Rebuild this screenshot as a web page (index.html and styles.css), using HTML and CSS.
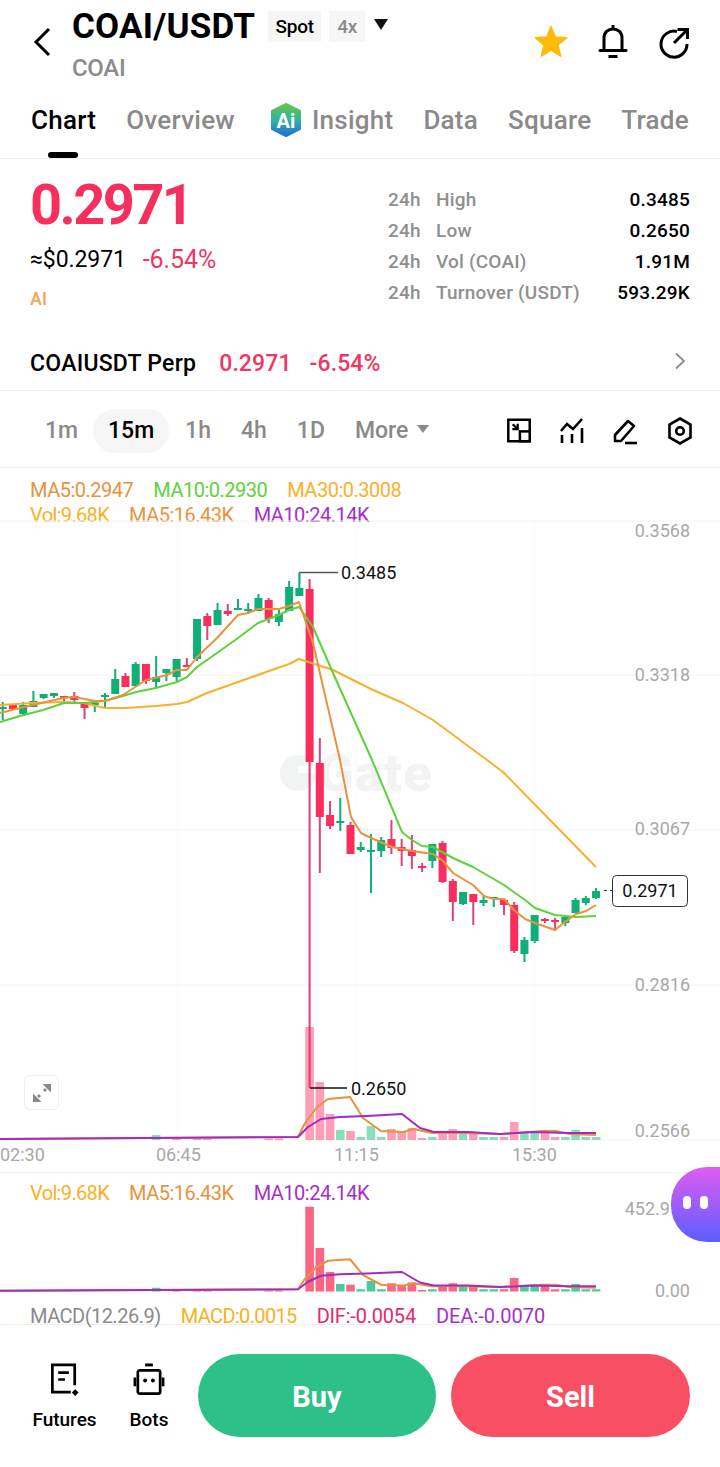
FILE: index.html
```html
<!DOCTYPE html>
<html lang="en">
<head>
    <meta charset="UTF-8">
    <meta name="viewport" content="width=device-width, initial-scale=1.0">
    <title>COAI/USDT</title>
    <link rel="stylesheet" href="styles.css">
</head>
<body>
    <div class="page">
        <header class="top">
            <svg class="back" width="18" height="30" viewBox="0 0 18 30"><path d="M16 2 L3 15 L16 28" fill="none" stroke="#000" stroke-width="3"/></svg>
            <div class="pair">
                <div class="pair-line">
                    <h1>COAI/USDT</h1>
                    <span class="chip">Spot</span>
                    <span class="chip chip-grey">4x</span>
                    <span class="caret"></span>
                </div>
                <div class="coin">COAI</div>
            </div>
            <div class="top-icons">
                <svg width="34" height="34" viewBox="0 0 36 36"><path d="M18 1.500 L22.600 12.600 L34.600 13.500 L25.400 21.200 L28.300 33 L18 26.600 L7.700 33 L10.600 21.200 L1.400 13.500 L13.400 12.600 Z" fill="#fdbb0a" stroke="#fdbb0a" stroke-width="1.500" stroke-linejoin="round"/></svg>
                <svg width="32" height="36" viewBox="0 0 32 36"><path d="M7 25 V14 C7 8.500 11 5 16 5 C21 5 25 8.500 25 14 V25" fill="none" stroke="#000" stroke-width="3"/><path d="M3 26.500 H29" stroke="#000" stroke-width="3" stroke-linecap="round"/><path d="M16 1 V5 M11.500 32.500 H20.500" stroke="#000" stroke-width="3"/></svg>
                <svg width="32" height="36" viewBox="0 0 32 36"><path d="M19 7.500 A13 13 0 1 0 29 20" fill="none" stroke="#000" stroke-width="3"/><path d="M16 19 L28 7 M19.500 5.500 H29.500 V15" fill="none" stroke="#000" stroke-width="3"/></svg>
            </div>
        </header>

        <nav class="tabs">
            <span class="tab tab-on">Chart</span>
            <span class="tab">Overview</span>
            <span class="tab tab-insight">
                <svg width="32" height="34" viewBox="0 0 32 34">
                    <defs><linearGradient id="hex" x1="0" y1="0" x2="0" y2="1"><stop offset="0" stop-color="#6cc24a"/><stop offset="0.5" stop-color="#2fb5a0"/><stop offset="1" stop-color="#1f6fe0"/></linearGradient></defs>
                    <path d="M16 1 L30 8 V26 L16 33 L2 26 V8 Z" fill="url(#hex)" stroke="url(#hex)" stroke-width="2" stroke-linejoin="round"/>
                    <text x="16" y="25" text-anchor="middle" class="hex-text">Ai</text>
                </svg>
                Insight
            </span>
            <span class="tab">Data</span>
            <span class="tab">Square</span>
            <span class="tab">Trade</span>
        </nav>

        <section class="stats">
            <div class="price-box">
                <div class="price">0.2971</div>
                <div class="price-sub"><span>≈$0.2971</span><span class="red">-6.54%</span></div>
                <div class="tag">AI</div>
            </div>
            <div class="facts">
                <span>24h</span><span>High</span><b>0.3485</b>
                <span>24h</span><span>Low</span><b>0.2650</b>
                <span>24h</span><span>Vol (COAI)</span><b>1.91M</b>
                <span>24h</span><span>Turnover (USDT)</span><b>593.29K</b>
            </div>
        </section>

        <div class="perp">
            <span class="perp-name">COAIUSDT Perp</span>
            <span class="red">0.2971</span>
            <span class="red">-6.54%</span>
            <svg class="perp-arrow" width="12" height="18" viewBox="0 0 12 18"><path d="M2 1.500 L10 9 L2 16.500" fill="none" stroke="#8a8a8a" stroke-width="1.800"/></svg>
        </div>

        <div class="frames">
            <span class="frame">1m</span>
            <span class="frame frame-on">15m</span>
            <span class="frame">1h</span>
            <span class="frame">4h</span>
            <span class="frame">1D</span>
            <span class="frame frame-more">More<i class="caret caret-small"></i></span>
            <div class="frame-icons">
                <svg width="26" height="25" viewBox="0 0 28 28"><path d="M2 2 H26 V26 H2 Z" fill="none" stroke="#000" stroke-width="2.800"/><rect x="15" y="15" width="11" height="11" fill="#fff" stroke="#000" stroke-width="2.800"/><path d="M7 7 L12 12 M12.500 6.500 V12.500 H6.500" fill="none" stroke="#000" stroke-width="2.600"/></svg>
                <svg width="26" height="28" viewBox="0 0 26 28"><path d="M2 14 L8 7 L14 12 L23 2" fill="none" stroke="#000" stroke-width="2.600"/><path d="M3 18 V26 M13 17 V26 M23 11 V26" stroke="#000" stroke-width="2.600"/></svg>
                <svg width="26" height="28" viewBox="0 0 26 28"><path d="M3 18 L16 4 L22 9 L9 24 H3 Z" fill="none" stroke="#000" stroke-width="2.600" stroke-linejoin="round"/><path d="M13 26 H25" stroke="#000" stroke-width="2.600"/></svg>
                <svg class="frame-last" width="26" height="28" viewBox="0 0 26 28"><path d="M13 1.500 L23.500 7.500 V20.500 L13 26.500 L2.500 20.500 V7.500 Z" fill="none" stroke="#000" stroke-width="2.600"/><circle cx="13" cy="14" r="3.800" fill="none" stroke="#000" stroke-width="2.600"/></svg>
            </div>
        </div>

        <section class="chart">
            <div class="legend legend-main">
                <div><span class="c-ma5">MA5:0.2947</span><span class="c-ma10">MA10:0.2930</span><span class="c-ma30">MA30:0.3008</span></div>
                <div><span class="c-vol">Vol:9.68K</span><span class="c-ma5">MA5:16.43K</span><span class="c-pur">MA10:24.14K</span></div>
            </div>
            <svg id="mainChart" class="plot" width="720" height="652" viewBox="0 520 720 652"></svg>
            <div class="legend legend-sub">
                <div><span class="c-vol">Vol:9.68K</span><span class="c-ma5">MA5:16.43K</span><span class="c-pur">MA10:24.14K</span></div>
            </div>
            <svg id="subChart" class="plot" width="720" height="103" viewBox="0 1200 720 103"></svg>
            <div class="legend legend-macd">
                <div><span class="c-grey">MACD(12.26.9)</span><span class="c-vol">MACD:0.0015</span><span class="c-dif">DIF:-0.0054</span><span class="c-pur c-dea">DEA:-0.0070</span></div>
            </div>
            <button class="expand" type="button">
                <svg width="20" height="20" viewBox="0 0 20 20"><path d="M10.500 1 H19 V9.500 Z M1 10.500 V19 H9.500 Z" fill="#8a8a8a"/><path d="M14 6 L12 8 M8 12 L6 14" stroke="#8a8a8a" stroke-width="3"/></svg>
            </button>
            <div class="buddy"><i></i><i></i></div>
        </section>

        <footer class="bottom">
            <div class="tool">
                <svg width="32" height="33" viewBox="0 0 32 34"><path d="M26 23 V2 H3 V30 H22" fill="none" stroke="#000" stroke-width="2.800"/><path d="M9 10 H20 M9 17 H16" stroke="#000" stroke-width="2.800"/><path d="M26.500 27 L30 30.500 L26.500 34 L23 30.500 Z" fill="#000"/></svg>
                <span>Futures</span>
            </div>
            <div class="tool tool-bots">
                <svg width="32" height="33" viewBox="0 0 32 34"><path d="M12 2 H20" stroke="#000" stroke-width="3"/><rect x="4.500" y="7.500" width="23" height="24" rx="2" fill="none" stroke="#000" stroke-width="2.800"/><path d="M1.500 15 V24 M30.500 15 V24" stroke="#000" stroke-width="2.800"/><circle cx="12" cy="18" r="2" fill="#000"/><circle cx="20" cy="18" r="2" fill="#000"/></svg>
                <span>Bots</span>
            </div>
            <button class="trade trade-buy" type="button">Buy</button>
            <button class="trade trade-sell" type="button">Sell</button>
        </footer>
    </div>
    <script src="chart.js"></script>
</body>
</html>
```

FILE: styles.css
```css
* {
    box-sizing: border-box;
}
body {
    margin: 0;
    background-color: #fff;
    color: #000;
    font-family: Roboto, "Liberation Sans", sans-serif;
}
.page {
    width: 720px;
    height: 1467px;
    overflow: hidden;
}
.red {
    color: #ef3763;
}

/* header */
.top {
    display: flex;
    height: 92px;
    padding: 8px 30px 0 33px;
}
.back {
    margin: 19px 21px 0 0;
}
.pair-line {
    display: flex;
    align-items: center;
    height: 36px;
}
h1 {
    margin: 0 13px 0 0;
    font-size: 35px;
    font-weight: 700;
    letter-spacing: 0.2px;
}
.chip {
    display: flex;
    align-items: center;
    justify-content: center;
    width: 53px;
    height: 31px;
    margin-right: 8px;
    background-color: #f6f6f6;
    font-size: 19px;
    font-weight: 500;
    letter-spacing: -0.3px;
}
.chip-grey {
    width: 36px;
    color: #8a8a8a;
}
.caret {
    display: inline-block;
    margin-left: 1px;
    margin-bottom: 3px;
    border-left: 7px solid transparent;
    border-right: 7px solid transparent;
    border-top: 11px solid #111;
}
.coin {
    margin-top: 10px;
    color: #8c8c8c;
    font-size: 24px;
    font-weight: 500;
    letter-spacing: -0.3px;
}
.top-icons {
    display: flex;
    gap: 29px;
    align-items: center;
    margin-left: auto;
    margin-bottom: 16px;
}

/* tabs */
.tabs {
    display: flex;
    height: 67px;
    padding: 14px 0 0 31px;
    border-bottom: 1px solid #eeeeee;
    font-size: 26px;
    font-weight: 500;
    color: #8a8a8a;
}
.tab {
    position: relative;
    margin-right: 30px;
    line-height: 28px;
    letter-spacing: 0.25px;
}
.tab-on {
    color: #000;
}
.tab-on::after {
    content: "";
    position: absolute;
    left: 17px;
    top: 46px;
    width: 30px;
    height: 6px;
    border-radius: 3px;
    background-color: #000;
}
.tab-insight {
    display: flex;
    align-items: center;
    gap: 10px;
    height: 28px;
    margin-left: 5px;
}
.tab-insight svg {
    margin: -3px 0;
}
.hex-text {
    fill: #fff;
    font-size: 20px;
    font-weight: 700;
}

/* price block */
.stats {
    display: flex;
    justify-content: space-between;
    height: 172px;
    padding: 15px 30px 0;
}
.price {
    height: 62px;
    color: #f5305e;
    font-size: 56px;
    font-weight: 700;
    line-height: 62px;
    letter-spacing: -2.6px;
}
.price-sub {
    display: flex;
    gap: 17px;
    margin-top: 10px;
    font-size: 23px;
    line-height: 28px;
    letter-spacing: -0.1px;
}
.price-sub .red {
    font-size: 25px;
}
.tag {
    margin-top: 14px;
    color: #f5a35f;
    font-size: 18px;
    font-weight: 500;
}
.facts {
    display: grid;
    grid-template-columns: 48px 1fr auto;
    grid-auto-rows: 31px;
    width: 302px;
    margin-top: 12px;
    color: #8f8f8f;
    font-size: 19px;
    font-weight: 500;
    line-height: 27px;
    letter-spacing: 0.2px;
}
.facts b {
    color: #000;
    font-weight: 500;
    text-align: right;
}

/* perp row */
.perp {
    display: flex;
    align-items: center;
    gap: 18px;
    height: 60px;
    padding: 5px 34px 0 30px;
    border-bottom: 1px solid #eeeeee;
    font-size: 23px;
    font-weight: 500;
    letter-spacing: 0.1px;
}
.perp-name {
    margin-right: 5px;
    letter-spacing: 0.25px;
}
.perp-arrow {
    margin-left: auto;
    margin-top: -4px;
}

/* intervals */
.frames {
    display: flex;
    align-items: center;
    height: 77px;
    padding-left: 45px;
    padding-top: 3px;
    border-bottom: 1px solid #eeeeee;
    color: #8a8a8a;
    font-size: 23px;
    font-weight: 500;
}
.frame {
    margin-right: 30px;
}
.frame-on {
    width: 76px;
    height: 44px;
    margin: 0 16px 0 -15px;
    border-radius: 22px;
    background-color: #f6f6f6;
    color: #000;
    line-height: 44px;
    text-align: center;
}
.frame-more {
    display: flex;
    align-items: center;
    margin-right: 0;
}
.caret-small {
    margin: 0 0 3px 9px;
    border-left-width: 6px;
    border-right-width: 6px;
    border-top: 8px solid #8a8a8a;
}
.frame-icons {
    display: flex;
    align-items: center;
    gap: 27px;
    margin-left: auto;
    margin-right: 27px;
}
.frame-last {
    margin-left: 2px;
}

/* chart area */
.chart {
    position: relative;
}
.plot {
    display: block;
}
.legend {
    padding-left: 30px;
    font-size: 20px;
    letter-spacing: -0.5px;
}
.legend span {
    margin-right: 20px;
}
.legend-main {
    height: 52px;
    padding-top: 10px;
    line-height: 25px;
}
.legend-sub {
    height: 28px;
    border-top: 1px solid #f2f2f2;
    padding-top: 7px;
    line-height: 26px;
}
.legend-macd {
    height: 22px;
    border-bottom: 1px solid #eeeeee;
    line-height: 27px;
}
.c-ma5 {
    color: #e8933c;
}
.c-ma10 {
    color: #5ed13c;
}
.c-ma30 {
    color: #fbb12a;
}
.c-vol {
    color: #f8b11f;
    letter-spacing: -0.65px;
}
.c-pur {
    color: #a330cc;
}
.c-grey {
    color: #8a8a8a;
}
.c-dif {
    color: #e02a6e;
    letter-spacing: -0.2px;
}
.c-dea {
    letter-spacing: 0;
}
.axis {
    fill: #a8a8a8;
    font-family: Roboto, sans-serif;
    font-size: 18px;
}
.mark {
    fill: #111;
    font-family: Roboto, sans-serif;
    font-size: 18px;
}
.watermark {
    fill: #f2f3f3;
    font-family: Roboto, sans-serif;
    font-size: 52px;
    font-weight: 900;
    letter-spacing: 1.5px;
}
.expand {
    position: absolute;
    left: 24px;
    top: 607px;
    display: flex;
    align-items: center;
    justify-content: center;
    width: 35px;
    height: 35px;
    padding: 0;
    border: 1px solid #eeeeee;
    border-radius: 6px;
    background-color: #fff;
}
.buddy {
    position: absolute;
    left: 671px;
    top: 699px;
    display: flex;
    gap: 9px;
    width: 60px;
    height: 75px;
    padding: 29px 0 0 12px;
    border-radius: 36px 0 0 36px;
    background: linear-gradient(#df5df0, #5b5eff);
}
.buddy i {
    width: 8px;
    height: 13px;
    border-radius: 4px;
    background-color: #fff;
}

/* bottom bar */
.bottom {
    display: flex;
    align-items: flex-start;
    height: 142px;
    padding: 29px 30px 0 32px;
}
.tool {
    display: flex;
    flex-direction: column;
    align-items: center;
    width: 65px;
    margin-top: 9px;
    font-size: 19px;
    font-weight: 500;
}
.tool span {
    margin-top: 12px;
}
.tool-bots {
    width: 40px;
    margin-left: 32px;
    margin-right: 29px;
}
.trade {
    height: 83px;
    padding-top: 3px;
    border: none;
    border-radius: 42px;
    color: #fff;
    font-family: Roboto, sans-serif;
    font-size: 29px;
    font-weight: 700;
}
.trade-buy {
    width: 238px;
    margin-right: 15px;
    background-color: #2dc189;
}
.trade-sell {
    width: 239px;
    background-color: #f94f64;
}
```

FILE: chart.js
```js
// coordinates below are page pixels, the svg viewBox lines up with them
var NS = 'http://www.w3.org/2000/svg';
var UP = '#0fb077';
var DOWN = '#fb2d5c';
var MA5 = '#e8933c';
var MA10 = '#5ed13c';
var MA30 = '#f7b02c';
var PURPLE = '#a02cc4';

// colour, body top, body bottom, wick top, wick bottom
var candles = [
    ['u',707,709,702,720],['d',705,709,705,710],['u',705,714,702,715],['u',701,707,691,707],
    ['u',694,698,694,699],['u',693,696,693,698],['d',696,698,696,701],['d',696,700,692,703],
    ['d',704,708,704,719],['u',703,704.500,702,712],['u',695,696.500,693,707],['u',679,694,669,694],
    ['d',676,687,673,687],['u',664,686,662,686],['d',664,681,664,684],['u',677,682,656,688],
    ['u',669,673,669,681],['u',659,677,659,681],['d',665,666,658,667],['u',619,659,619,661],
    ['d',616,626,613,640],['u',610,625,603,625],['d',611,614,604,616],['u',608,610,599,610],
    ['u',609,610,603,614],['u',598,611,594,611],['d',600,619,598,623],['u',614,622,610,626],
    ['u',587,611,581,611],['u',588,596,573,596],['d',589,762,579,1088],['d',763,817,738,873],
    ['d',815,826,801,829],['u',821,822.500,798,831],['d',825,854,822,854],['u',847,850,842,852],
    ['u',850,851,834,893],['u',840,851,837,857],['d',839,848,820,854],['d',847,851,839,866],
    ['d',850,856,835,869],['d',866,868,863,872],['u',844,861,844,868],['d',843,882,841,883],
    ['d',881,902,879,921],['u',892,904,892,905],['d',894,902,894,925],['u',900,903,896,906],
    ['u',897,898,897,907],['d',900,905,898,915],['d',905,951,902,953],['u',940,954,937,962],
    ['u',915,941,915,943],['d',919,921,918,923],['d',920,921,918,931],['u',917,923,916,926],
    ['u',900,913,898,913],['u',898,903,896,905],['u',891,898,888,899]
];

// volume bar tops for the main pane, start at candle 30
var volTops = [1027,1082,1114,1130,1131,1137,1126,1137,1129,1132,1128,1138,1137,1132,1129,1132,1132,1137,1137,1137,1122,1133,1133,1132,1137,1137,1130,1137,1137];

var ma5 = [[0,713],[20,708],[33,705],[63,698],[74,697],[95,701],[105,701],[123,695],[146,680],[167,675],[177,670],[187,670],[197,657],[217,638],[238,615],[248,613],[258,609],[279,609],[289,606],[299,602],[313,643],[340,760],[351,817],[361,833],[371,838],[392,847],[412,851],[433,854],[443,861],[453,873],[473,885],[484,896],[494,899],[504,899],[514,910],[525,919],[535,923],[555,930],[565,922],[576,914],[586,911],[596,905]];
var ma10 = [[0,722],[20,716],[43,710],[64,703],[84,703],[105,701],[123,696],[136,692],[156,688],[177,682],[187,677],[197,667],[217,653],[238,638],[258,623],[279,615],[289,610],[299,607],[313,627],[333,673],[372,760],[402,832],[412,840],[422,846],[433,847],[453,858],[473,867],[504,885],[525,900],[535,908],[555,915],[576,917],[596,916]];
var ma30 = [[0,705],[33,703],[64,702],[84,703],[105,708],[125,708],[156,706],[177,704],[187,702],[207,693],[238,682],[269,671],[289,664],[299,659],[333,670],[373,690],[403,703],[433,720],[487,760],[503,772],[596,867]];
var volMa5 = [[0,1139],[298,1137],[305,1123],[317,1107],[328,1099],[350,1097],[363,1118],[381,1131],[404,1132],[413,1129],[432,1133],[459,1133],[500,1134],[542,1131],[556,1131],[569,1134],[596,1135]];
var volMa10 = [[0,1139],[298,1137],[308,1127],[321,1119],[340,1117],[367,1116],[402,1114],[420,1128],[434,1132],[468,1132],[500,1134],[533,1132],[569,1133],[596,1133]];

function el(parent, name, attrs, text) {
    var node = document.createElementNS(NS, name);
    for (var key in attrs) {
        node.setAttribute(key, attrs[key]);
    }
    if (text) {
        node.textContent = text;
    }
    parent.appendChild(node);
    return node;
}

function candleX(i) {
    return 2.7 + 10.23 * i;
}

function line(svg, points, colour, mapY) {
    var out = [];
    for (var i = 0; i < points.length; i++) {
        out.push(points[i][0] + ',' + (mapY ? mapY(points[i][1]) : points[i][1]));
    }
    el(svg, 'polyline', {
        points: out.join(' '), fill: 'none', stroke: colour,
        'stroke-width': 2, 'stroke-linejoin': 'round'
    });
}

function volumeBars(svg, mapY, opacity, colourUp, colourDown) {
    var small = [[15,1135],[17,1138.500],[19,1138.500],[20,1138.500],[26,1138.500],[27,1138.500]];
    var i;
    for (i = 0; i < small.length; i++) {
        el(svg, 'rect', { x: candleX(small[i][0]) - 4.300, y: mapY(small[i][1]), width: 8.600, height: mapY(1140) - mapY(small[i][1]), fill: i == 0 ? colourUp : colourDown, opacity: opacity });
    }
    for (i = 0; i < volTops.length; i++) {
        var colour = candles[i + 30][0] == 'u' ? colourUp : colourDown;
        el(svg, 'rect', { x: candleX(i + 30) - 4.300, y: mapY(volTops[i]), width: 8.600, height: mapY(1140) - mapY(volTops[i]), fill: colour, opacity: opacity });
    }
}

function drawMain() {
    var svg = document.getElementById('mainChart');
    var i;

    // grid
    var rows = [521, 675, 830, 985, 1140];
    for (i = 0; i < rows.length; i++) {
        el(svg, 'path', { d: 'M0 ' + rows[i] + ' H720', stroke: '#f4f4f4', 'stroke-width': 1 });
    }
    var cols = [178, 356, 534];
    for (i = 0; i < cols.length; i++) {
        el(svg, 'path', { d: 'M' + cols[i] + ' 521 V1140', stroke: '#f9f9f9', 'stroke-width': 1 });
    }

    el(svg, 'circle', { cx: 298, cy: 773, r: 18, fill: '#f2f3f3' });
    el(svg, 'rect', { x: 298, y: 766, width: 20, height: 7, fill: '#fff' });
    el(svg, 'text', { x: 318, y: 791, 'class': 'watermark' }, 'Gate');

    volumeBars(svg, function (y) { return y; }, 0.55, '#2dc189', '#fb4f7a');

    // candles
    for (i = 0; i < candles.length; i++) {
        var c = candles[i];
        var colour = c[0] == 'u' ? UP : DOWN;
        var x = candleX(i);
        var wick = c[0] == 'u' ? UP : (i == 30 ? '#e23a6a' : '#d8457a');
        el(svg, 'rect', { x: x - 1, y: c[3], width: 2, height: c[4] - c[3], fill: wick });
        el(svg, 'rect', { x: x - 4, y: c[1], width: 8, height: Math.max(c[2] - c[1], 2), fill: colour });
    }

    line(svg, ma30, MA30);
    line(svg, ma10, MA10);
    line(svg, ma5, MA5);
    line(svg, volMa5, MA5);
    line(svg, volMa10, PURPLE);

    // high / low marks
    el(svg, 'path', { d: 'M299.500 584 V572.500', stroke: UP, 'stroke-width': 1.500, fill: 'none' });
    el(svg, 'path', { d: 'M299 572.500 H338', stroke: '#555', 'stroke-width': 1.500 });
    el(svg, 'text', { x: 341, y: 579, 'class': 'mark' }, '0.3485');
    el(svg, 'path', { d: 'M310 1088 H347', stroke: '#111', 'stroke-width': 1.500 });
    el(svg, 'text', { x: 351, y: 1095, 'class': 'mark' }, '0.2650');

    // axis text
    var prices = [['0.3568', 537], ['0.3318', 681], ['0.3067', 835], ['0.2816', 991], ['0.2566', 1137]];
    for (i = 0; i < prices.length; i++) {
        el(svg, 'text', { x: 690, y: prices[i][1], 'text-anchor': 'end', 'class': 'axis' }, prices[i][0]);
    }
    var times = [['02:30', 0], ['06:45', 156], ['11:15', 334], ['15:30', 512]];
    for (i = 0; i < times.length; i++) {
        el(svg, 'text', { x: times[i][1], y: 1161, 'class': 'axis' }, times[i][0]);
    }

    // last price box
    el(svg, 'path', { d: 'M604 890.500 H612', stroke: '#333', 'stroke-width': 1, 'stroke-dasharray': '3 3' });
    el(svg, 'rect', { x: 612.500, y: 875.500, width: 75, height: 31, rx: 4, fill: '#fff', stroke: '#333' });
    el(svg, 'text', { x: 650, y: 897, 'text-anchor': 'middle', 'class': 'mark' }, '0.2971');
}

function drawSub() {
    var svg = document.getElementById('subChart');
    var mapY = function (y) { return 1291.500 - (1140 - y) * 0.75; };
    volumeBars(svg, mapY, 0.85, '#2dc189', '#f94a6e');
    line(svg, volMa5, MA5, mapY);
    line(svg, volMa10, PURPLE, mapY);
    el(svg, 'text', { x: 680, y: 1215, 'text-anchor': 'end', 'class': 'axis' }, '452.91');
    el(svg, 'text', { x: 690, y: 1297, 'text-anchor': 'end', 'class': 'axis' }, '0.00');
}

drawMain();
drawSub();
```
